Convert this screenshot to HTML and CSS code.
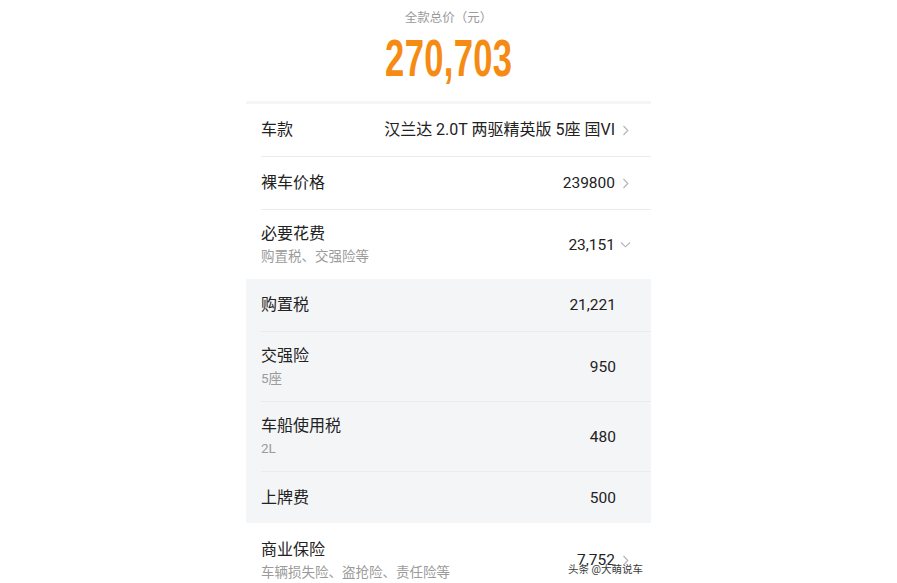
FILE: index.html
```html
<!DOCTYPE html>
<html lang="zh-CN">
<head>
<meta charset="utf-8">
<title>全款总价</title>
<link rel="stylesheet" href="styles.css">
</head>
<body>
<div class="phone">
  <header class="summary">
    <div class="summary-title">全款总价（元）</div>
    <div class="summary-total"><span class="total-num">270,703</span></div>
  </header>

  <section class="list">
    <div class="row">
      <div class="row-inner">
        <div class="label"><div class="name">车款</div></div>
        <div class="value wide">汉兰达 2.0T 两驱精英版 5座 国VI</div>
        <span class="chev"><svg width="7" height="11" viewBox="0 0 7 11"><polyline points="1.5,1 5.8,5.5 1.5,10" fill="none" stroke="#b3b3b3" stroke-width="1.1"/></svg></span>
      </div>
    </div>
    <div class="row">
      <div class="row-inner">
        <div class="label"><div class="name">裸车价格</div></div>
        <div class="value">239800</div>
        <span class="chev"><svg width="7" height="11" viewBox="0 0 7 11"><polyline points="1.5,1 5.8,5.5 1.5,10" fill="none" stroke="#b3b3b3" stroke-width="1.1"/></svg></span>
      </div>
    </div>
    <div class="row tall">
      <div class="row-inner no-line">
        <div class="label"><div class="name">必要花费</div><div class="sub">购置税、交强险等</div></div>
        <div class="value">23,151</div>
        <span class="chev"><svg width="11" height="7" viewBox="0 0 11 7"><polyline points="1,1.5 5.5,5.8 10,1.5" fill="none" stroke="#b3b3b3" stroke-width="1.1"/></svg></span>
      </div>
    </div>
  </section>

  <section class="list detail">
    <div class="row">
      <div class="row-inner">
        <div class="label"><div class="name">购置税</div></div>
        <div class="value">21,221</div>
      </div>
    </div>
    <div class="row tall">
      <div class="row-inner">
        <div class="label"><div class="name">交强险</div><div class="sub">5座</div></div>
        <div class="value">950</div>
      </div>
    </div>
    <div class="row tall">
      <div class="row-inner">
        <div class="label"><div class="name">车船使用税</div><div class="sub">2L</div></div>
        <div class="value">480</div>
      </div>
    </div>
    <div class="row">
      <div class="row-inner no-line short-end">
        <div class="label"><div class="name">上牌费</div></div>
        <div class="value">500</div>
      </div>
    </div>
  </section>

  <section class="list">
    <div class="row tall last">
      <div class="row-inner">
        <div class="label"><div class="name">商业保险</div><div class="sub">车辆损失险、盗抢险、责任险等</div></div>
        <div class="value">7,752</div>
        <span class="chev"><svg width="7" height="11" viewBox="0 0 7 11"><polyline points="1.5,1 5.8,5.5 1.5,10" fill="none" stroke="#b3b3b3" stroke-width="1.1"/></svg></span>
      </div>
    </div>
  </section>

  <div class="watermark">头条 @大萌说车</div>
</div>
</body>
</html>
```

FILE: styles.css
```css
html, body {
  margin: 0;
  padding: 0;
  background: #ffffff;
  height: 100%;
  overflow: hidden;
}

body {
  font-family: Roboto, "Noto Sans CJK SC", "Noto Sans", sans-serif;
  color: #222;
}

.phone {
  position: relative;
  width: 405px;
  margin: 0 auto;
  background: #fff;
}

.summary {
  height: 101px;
  border-bottom: 3px solid #f5f5f6;
  text-align: center;
}

.summary-title {
  padding-top: 10px;
  font-size: 12.5px;
  line-height: 16px;
  color: #9a9a9a;
}

.summary-total {
  margin-top: 6px;
  height: 52px;
  line-height: 52px;
}

.total-num {
  display: inline-block;
  font-family: "Liberation Sans", Arial, sans-serif;
  font-weight: 700;
  font-size: 52px;
  line-height: 52px;
  color: #f68b14;
  transform: scaleX(0.665);
  letter-spacing: 0.5px;
}

.list {
  background: #fff;
}

.list.detail {
  background: #f4f5f7;
}

.row {
  padding-left: 15px;
}

.row-inner {
  display: flex;
  align-items: center;
  height: 52px;
  border-bottom: 1px solid #ebebeb;
  padding-right: 20px;
}

.row.tall .row-inner {
  height: 69px;
}

.row.tall.last .row-inner {
  height: 74px;
}

.row-inner.no-line {
  border-bottom: 0;
}

.row-inner.short-end {
  height: 51px;
}

.detail .row-inner {
  padding-right: 35px;
}

.label {
  flex: 1;
  min-width: 0;
}

.name {
  font-size: 16px;
  line-height: 20px;
  color: #222;
}

.sub {
  margin-top: 3px;
  font-size: 13.5px;
  line-height: 18px;
  color: #9b9b9b;
}

.value {
  font-size: 15.5px;
  line-height: 20px;
  color: #222;
  white-space: nowrap;
}

.value.wide {
  font-size: 16px;
}

.chev {
  display: flex;
  align-items: center;
  justify-content: center;
  width: 11px;
  margin-left: 5px;
}

.chev svg {
  display: block;
}

.watermark {
  position: absolute;
  left: 322px;
  top: 563px;
  font-size: 10.5px;
  line-height: 14px;
  color: #3a3a3a;
  text-shadow: 0 0 2px #fff, 0 0 2px #fff, 0 0 1px #fff;
  white-space: nowrap;
}
```
